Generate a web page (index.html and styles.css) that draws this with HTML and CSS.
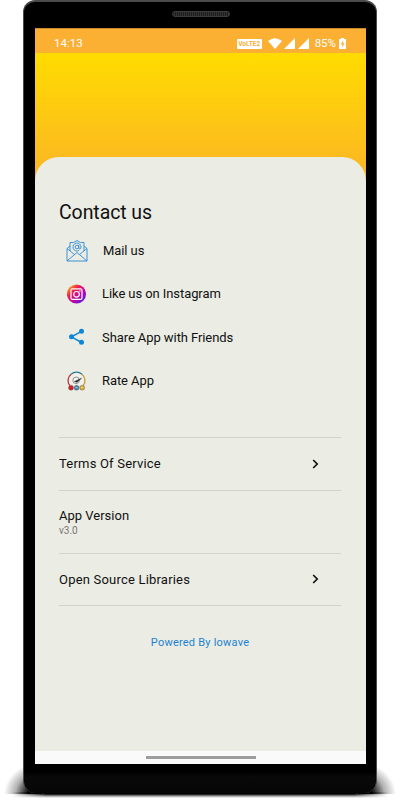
FILE: index.html
```html
<!DOCTYPE html>
<html lang="en">
<head>
  <meta charset="UTF-8">
  <meta name="viewport" content="width=device-width, initial-scale=1.0">
  <title>Contact us</title>
  <link rel="stylesheet" href="styles.css">
</head>
<body>
  <div class="phone">
    <div class="speaker"></div>
    <div class="screen">
      <!-- Status bar -->
      <div class="status-bar">
        <span class="time">14:13</span>
        <span class="lte">VoLTE2</span>
        <svg class="wifi" width="14" height="11" viewBox="0 0 14 11"><path d="M0 3Q7-2.6 14 3L7 11z" fill="#fff"/></svg>
        <svg class="signal" width="11" height="11" viewBox="0 0 11 11"><path d="M11 0v11H0z" fill="#fff"/></svg>
        <svg class="signal" width="11" height="11" viewBox="0 0 11 11"><path d="M11 0v11H0z" fill="#fff"/></svg>
        <span class="percent">85%</span>
        <svg class="battery" width="7" height="11" viewBox="0 0 7 11"><path d="M2 0h3v1h1.500q.5 0 .5.500v9q0 .5-.5.500h-6q-.5 0-.5-.5v-9Q0 1 .5 1H2z" fill="#fff"/><path d="M4.200 2.500L1.700 6.300h1.600v3l2.200-4H4z" fill="#fbaf33"/></svg>
      </div>

      <div class="page">
        <div class="sheet">
          <h1>Contact us</h1>
          <ul class="contacts">
            <li class="mail">
              <svg width="22" height="22" viewBox="0 0 22 22" fill="none" stroke="#2b8ad4" stroke-width=".9">
                <path d="M4 6L1 8.500V21h20V8.500L18 6M4 11V2.500h3.500L11 .6l3.500 1.900H18V11M1 8.500l7.500 6M21 8.500l-7.500 6M1 21l10-8.500L21 21"/>
                <circle cx="11" cy="7" r="1.800"/>
                <path d="M12.800 5.200v2.600q0 1.200 1 1.200 1.200 0 1.200-2a4 4 0 1 0-2 3.500"/>
              </svg>
              <span>Mail us</span>
            </li>
            <li>
              <svg width="20" height="20" viewBox="0 0 20 20">
                <defs>
                  <linearGradient id="insta" x1=".1" y1=".15" x2=".85" y2=".9">
                    <stop offset="0" stop-color="#ff9d25"/>
                    <stop offset=".28" stop-color="#ef234f"/>
                    <stop offset=".6" stop-color="#c5079b"/>
                    <stop offset="1" stop-color="#6517dd"/>
                  </linearGradient>
                </defs>
                <circle cx="9.500" cy="10" r="9.600" fill="url(#insta)"/>
                <rect x="4" y="4.800" width="11" height="10.600" rx="1.500" fill="none" stroke="#fff" stroke-width="1.200"/>
                <circle cx="9.500" cy="10.300" r="2.800" fill="none" stroke="#fff" stroke-width="1.200"/>
                <circle cx="12.900" cy="7" r=".8" fill="#fff"/>
              </svg>
              <span>Like us on Instagram</span>
            </li>
            <li>
              <svg width="20" height="20" viewBox="0 0 20 20" fill="#0c86d8">
                <path d="M14.500 4.300L4.500 9.800l10 5.700" fill="none" stroke="#0c86d8" stroke-width="1.500"/>
                <circle cx="14.500" cy="4.300" r="2.500"/>
                <circle cx="4.500" cy="9.800" r="2.500"/>
                <circle cx="14.500" cy="15.300" r="2.500"/>
              </svg>
              <span>Share App with Friends</span>
            </li>
            <li>
              <svg width="20" height="20" viewBox="0 0 20 20" fill="none">
                <circle cx="9.500" cy="9.300" r="8.500" fill="#f1f1ec"/>
                <path d="M2.800 14.500A8 8 0 0 1 4.100 3.200" stroke="#b5353a" stroke-width="1.300"/>
                <path d="M4.100 3.200A8 8 0 0 1 14.900 3.200" stroke="#2d7895" stroke-width="1.300"/>
                <path d="M14.900 3.200A8 8 0 0 1 16.200 14.500" stroke="#c29732" stroke-width="1.300"/>
                <circle cx="9.100" cy="9.300" r="3.300" stroke="#777" stroke-width=".8"/>
                <path d="M7.500 10.500l7-3.200-4.600 4z" fill="#222" stroke="#222" stroke-width=".5"/>
                <g stroke="#666" stroke-width=".4">
                  <circle cx="4" cy="16.700" r="2.500" fill="#d51f24"/>
                  <circle cx="9.600" cy="16.700" r="2.500" fill="#3d83aa"/>
                  <circle cx="15.200" cy="16.700" r="2.500" fill="#d8a52a"/>
                </g>
                <path d="M8.400 16.700h2.400M14 16.700h2.400" stroke="#eee" stroke-width=".7"/>
              </svg>
              <span>Rate App</span>
            </li>
          </ul>

          <!-- Settings list -->
          <div class="row terms">
            <span>Terms Of Service</span>
            <svg width="7" height="10" viewBox="0 0 7 10"><path d="M1.200 1L5.200 5l-4 4" fill="none" stroke="#111" stroke-width="1.700"/></svg>
          </div>
          <div class="row version">
            <span>App Version</span>
            <small>v3.0</small>
          </div>
          <div class="row libraries">
            <span>Open Source Libraries</span>
            <svg width="7" height="10" viewBox="0 0 7 10"><path d="M1.200 1L5.200 5l-4 4" fill="none" stroke="#111" stroke-width="1.700"/></svg>
          </div>
          <div class="powered">Powered By lowave</div>
        </div>
      </div>

      <div class="nav-bar"><div class="handle"></div></div>
    </div>
  </div>
</body>
</html>
```

FILE: styles.css
```css
* {
  box-sizing: border-box;
}

body {
  margin: 0;
  height: 800px;
  overflow: hidden;
  background: #fff;
  font-family: Roboto, "Liberation Sans", sans-serif;
  color: #111;
}

.phone {
  position: relative;
  width: 354px;
  height: 793px;
  margin: 0 0 0 23px;
  padding: 0 11px 0 12px;
  display: flex;
  flex-direction: column;
  align-items: center;
  border: solid #4b4b4b;
  border-width: 2px 1px 0;
  border-radius: 12px;
  background: linear-gradient(#000 770px, #090909 775px, #060606);
}

/* shadow on the ground under the phone */
.phone::before {
  content: "";
  position: absolute;
  z-index: -1;
  left: -20px;
  right: -20px;
  bottom: -1px;
  height: 32px;
  background:
    radial-gradient(ellipse 38px 32px at 38px 100%, #000 35%, rgba(0, 0, 0, .3) 70%, transparent) 0 0 / 38px 100% no-repeat,
    radial-gradient(ellipse 38px 32px at 0 100%, #000 35%, rgba(0, 0, 0, .3) 70%, transparent) 100% 0 / 38px 100% no-repeat;
}

.phone::after {
  content: "";
  position: absolute;
  z-index: -1;
  left: -12px;
  right: -12px;
  bottom: -5px;
  height: 6px;
  background: linear-gradient(#000 2px, #999 4px, #fff);
  -webkit-mask-image: linear-gradient(90deg, transparent, #000 34px calc(100% - 34px), transparent);
  mask-image: linear-gradient(90deg, transparent, #000 34px calc(100% - 34px), transparent);
}

.speaker {
  width: 58px;
  height: 6px;
  margin: 9px 0 11px;
  flex: none;
  border: 1px solid #3c3c3c;
  border-radius: 3px;
  background: repeating-linear-gradient(90deg, #1c1c1c 0 1px, #333 1px 2px);
}

.screen {
  width: 331px;
  height: 736px;
  display: flex;
  flex-direction: column;
  background: #ebece4;
}

.status-bar {
  height: 25px;
  flex: none;
  display: flex;
  align-items: center;
  padding: 5px 20px 0 19px;
  background: #fbaf33;
  border-top: 1px solid #c68b2c;
  color: #fff;
  font-size: 11.500px;
}

.time {
  font-size: 11.500px;
  margin-top: -1px;
}

.lte {
  width: 25px;
  height: 10px;
  margin-left: auto;
  border-radius: 1px;
  background: #fff;
  color: #fbaf33;
  font-size: 6.500px;
  font-weight: 700;
  line-height: 10px;
  text-align: center;
}

.wifi {
  margin: 0 2px 0 6px;
}

.signal {
  margin-right: 3px;
}

.percent {
  margin: -1px 3px 0 3px;
}

.page {
  flex: 1;
  display: flex;
  padding-top: 104px;
  background: linear-gradient(#ffdc00, #fbb426 128px);
}

.sheet {
  flex: 1;
  padding: 43px 25px 0 24px;
  border-radius: 24px 24px 0 0;
  background: #ebece4;
}

h1 {
  margin: 0;
  font-size: 19.500px;
  font-weight: 400;
  line-height: 26px;
  letter-spacing: -.08px;
}

.contacts {
  margin: 3px 0 35px;
  padding: 0;
  list-style: none;
}

.contacts li {
  height: 43.300px;
  display: flex;
  align-items: center;
  gap: 15px;
  padding-left: 8px;
  font-size: 13px;
  letter-spacing: -.08px;
}

.contacts .mail {
  padding-left: 7px;
}

.row {
  display: flex;
  align-items: center;
  justify-content: space-between;
  border-top: 1px solid #d3d4cd;
  font-size: 13px;
  letter-spacing: .2px;
}

.row svg {
  margin-right: 22px;
}

.terms {
  height: 53px;
  padding-bottom: 1px;
}

.version {
  height: 63px;
  flex-direction: column;
  align-items: flex-start;
  justify-content: center;
  padding-bottom: 1px;
  letter-spacing: 0;
}

.version small {
  color: #777;
  font-size: 10px;
  margin-top: 2px;
}

.libraries {
  height: 53px;
  padding-bottom: 1px;
  border-bottom: 1px solid #d3d4cd;
}

.powered {
  margin-top: 29px;
  color: #1b82d2;
  font-size: 11px;
  line-height: 16px;
  letter-spacing: .22px;
  text-align: center;
}

.nav-bar {
  height: 13px;
  flex: none;
  padding-top: 5px;
  background: #fafafa;
}

.handle {
  width: 110px;
  height: 3px;
  margin: 0 auto;
  background: #9d9d9d;
}
```
